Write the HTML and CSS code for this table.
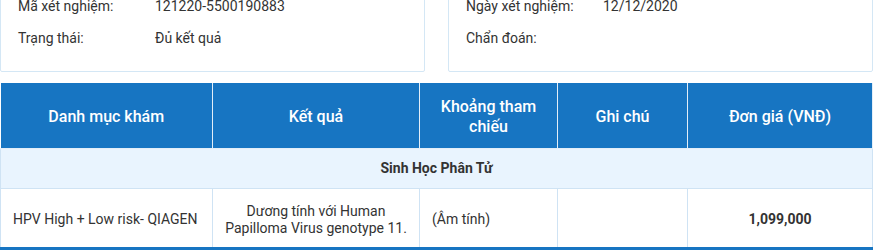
FILE: index.html
```
<!DOCTYPE html>
<html lang="vi">
<head>
    <meta charset="UTF-8">
    <meta name="viewport" content="width=device-width, initial-scale=1.0">
    <title>Kết quả xét nghiệm</title>
    <link rel="stylesheet" href="styles.css">
</head>
<body>

    <div class="info">
        <div class="info-box">
            <div class="info-row">
                <span class="info-label">Mã xét nghiệm:</span>
                <span class="info-value">121220-5500190883</span>
            </div>
            <div class="info-row">
                <span class="info-label">Trạng thái:</span>
                <span class="info-value">Đủ kết quả</span>
            </div>
        </div>
        <div class="info-box">
            <div class="info-row">
                <span class="info-label">Ngày xét nghiệm:</span>
                <span class="info-value">12/12/2020</span>
            </div>
            <div class="info-row">
                <span class="info-label">Chẩn đoán:</span>
                <span class="info-value"></span>
            </div>
        </div>
    </div>

    <table class="result-table">
        <colgroup>
            <col class="col-name">
            <col class="col-result">
            <col class="col-range">
            <col class="col-note">
            <col class="col-price">
        </colgroup>
        <thead>
            <tr>
                <th>Danh mục khám</th>
                <th>Kết quả</th>
                <th>Khoảng tham chiếu</th>
                <th>Ghi chú</th>
                <th>Đơn giá (VNĐ)</th>
            </tr>
        </thead>
        <tbody>
            <tr class="group-row">
                <td colspan="5">Sinh Học Phân Tử</td>
            </tr>
            <tr>
                <td>HPV High + Low risk- QIAGEN</td>
                <td class="center">Dương tính với Human Papilloma Virus genotype 11.</td>
                <td>(Âm tính)</td>
                <td></td>
                <td class="center price">1,099,000</td>
            </tr>
        </tbody>
    </table>

</body>
</html>
```

FILE: styles.css
```
body {
    font-family: Roboto, "Liberation Sans", Arial, sans-serif;
    font-size: 14px;
    color: #333;
    margin: 0;
    width: 873px;
    background: #fff;
}

/* top info boxes */
.info {
    display: flex;
    gap: 23px;
    margin-top: -24px;
}
.info-box {
    flex: 1;
    border: 1px solid #d4e7f5;
    border-radius: 2px;
    padding: 21px 17px 9px;
}
.info-row {
    display: flex;
    height: 32px;
    align-items: flex-start;
}
.info-label {
    width: 137px;
}

/* results table */
.result-table {
    width: 100%;
    margin-top: 11px;
    border-collapse: collapse;
    table-layout: fixed;
}
.col-name { width: 212px; }
.col-result { width: 207px; }
.col-range { width: 138px; }
.col-note { width: 130px; }
.result-table th {
    background-color: #1775c2;
    color: #fff;
    font-size: 16px;
    font-weight: 500;
    line-height: 20px;
    height: 65px;
    padding: 3px 16px 0;
    box-sizing: border-box;
    border: 1px solid #e3eef8;
    border-top: none;
    text-align: center;
}
.result-table th:first-child { border-left: none; }
.result-table td {
    border: 1px solid #cfe3f4;
    padding: 14px 12px 10px;
    line-height: 17px;
    height: 58px;
    box-sizing: border-box;
}
.result-table td.center {
    text-align: center;
}
.result-table .price {
    font-weight: 700;
}
.group-row td {
    background-color: #e9f4fe;
    text-align: center;
    font-weight: 700;
    height: 40px;
    padding: 1px 0 0;
}
.result-table tbody tr:last-child td {
    border-bottom: 3px solid #1775c2;
}
```
